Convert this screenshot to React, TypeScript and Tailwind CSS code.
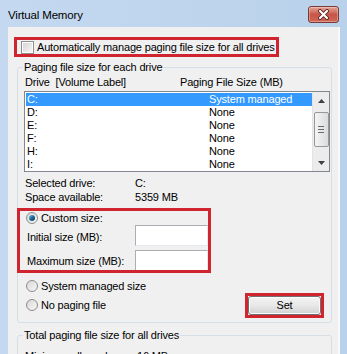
import React from "react";

const drives = [
  { drive: "C:", size: "System managed" },
  { drive: "D:", size: "None" },
  { drive: "E:", size: "None" },
  { drive: "F:", size: "None" },
  { drive: "H:", size: "None" },
  { drive: "I:", size: "None" },
];

function CheckBox() {
  return (
    <div className="w-[13px] h-[13px] shrink-0 border border-[#8f8f8f] bg-white p-[1px]">
      <div className="w-full h-full bg-gradient-to-br from-[#d6d6d6] to-[#f6f6f6]" />
    </div>
  );
}

function Radio({ checked }: { checked?: boolean }) {
  return (
    <div className="w-[12px] h-[12px] shrink-0 rounded-full border border-[#8c8c8c] bg-gradient-to-br from-[#d8d8d8] to-[#f8f8f8] flex items-center justify-center">
      {checked && (
        <div className="w-[6px] h-[6px] rounded-full bg-gradient-to-br from-[#6fc3e6] via-[#1d6a94] to-[#0c3450]" />
      )}
    </div>
  );
}

function RedBox({ className, children }: { className?: string; children?: React.ReactNode }) {
  return <div className={"border-[3px] border-[#d0252f] " + (className ?? "")}>{children}</div>;
}

function GroupBox({
  title,
  className,
  children,
}: {
  title: string;
  className?: string;
  children?: React.ReactNode;
}) {
  return (
    <div className={"relative border border-[#d5dfe5] rounded-[3px] " + (className ?? "")}>
      <span className="absolute top-[-8px] left-[5px] px-[1px] leading-[14px] bg-[#f0f0f0] whitespace-nowrap">
        {title}
      </span>
      {children}
    </div>
  );
}

function ScrollBar() {
  return (
    <div className="w-[17px] shrink-0 bg-[#ececec] border-l border-[#e4e4e4] flex flex-col items-center">
      <div className="h-[17px] w-full flex items-center justify-center">
        <svg width="7" height="4" viewBox="0 0 7 4">
          <path d="M0 4 L3.5 0 L7 4 Z" fill="#404040" />
        </svg>
      </div>
      <div className="mt-[3px] h-[35px] w-[15px] rounded-[2px] border border-[#979797] bg-gradient-to-r from-[#f4f4f4] to-[#dcdcdc] flex flex-col items-center justify-center gap-[2px]">
        <div className="w-[6px] h-[1px] bg-[#6b6b6b]" />
        <div className="w-[6px] h-[1px] bg-[#6b6b6b]" />
        <div className="w-[6px] h-[1px] bg-[#6b6b6b]" />
      </div>
      <div className="mt-auto h-[17px] w-full flex items-center justify-center">
        <svg width="7" height="4" viewBox="0 0 7 4">
          <path d="M0 0 L3.5 4 L7 0 Z" fill="#404040" />
        </svg>
      </div>
    </div>
  );
}

function TextInput() {
  return (
    <div className="w-[73px] h-[21px] bg-white border border-[#e3e9ef] border-t-[#abadb3] border-l-[#abadb3]" />
  );
}

export default function App() {
  return (
    <div className="w-[347px] h-[354px] overflow-hidden bg-gradient-to-r from-[#c4d9f0] to-[#b9d1ea] text-[11px] tracking-[-0.17px] text-black font-['Liberation_Sans',Arial,sans-serif]">
      {/* Title bar */}
      <div className="h-[27px] flex items-start justify-between pl-[8px] pr-[8px]">
        <span className="pt-[7px] leading-[16px] text-[11.5px]">Virtual Memory</span>
        <div className="mt-[6px] h-[17px] w-[31px] rounded-[3px] border border-[#7a3a36] bg-gradient-to-b from-[#e4a597] via-[#c7564a] to-[#cf6655] flex items-center justify-center shadow-[inset_0_0_0_1px_rgba(255,255,255,0.3)]">
          <svg width="13" height="11" viewBox="0 0 13 11">
            <path d="M3 2 L10 9 M10 2 L3 9" stroke="#4a1d1a" strokeWidth="3.8" strokeLinecap="round" />
            <path d="M3 2 L10 9 M10 2 L3 9" stroke="#ffffff" strokeWidth="2.2" strokeLinecap="round" />
          </svg>
        </div>
      </div>

      {/* Dialog body */}
      <div className="ml-[8px] w-[332px] h-[327px] bg-[#f0f0f0] border-r-2 border-[#f7f9fb] pt-[10px]">
        <RedBox className="ml-[6px] w-[265px] h-[20px] flex items-center pl-[4px] gap-[3px]">
          <CheckBox />
          <span className="leading-[14px] whitespace-nowrap">
            Automatically manage paging file size for all drives
          </span>
        </RedBox>

        <GroupBox title="Paging file size for each drive" className="mt-[10px] ml-[9px] w-[315px] h-[256px] pl-[6px] pt-[7px]">
          <div className="flex h-[14px] leading-[14px] pl-[1px]">
            <span className="w-[155px]">Drive&nbsp;&nbsp;[Volume Label]</span>
            <span>Paging File Size (MB)</span>
          </div>

          <div className="mt-[2px] w-[306px] h-[81px] border border-[#828790] bg-white flex">
            <div className="flex-1 pt-[1px] pl-[1px]">
              {drives.map((d, i) => (
                <div
                  key={d.drive}
                  className={
                    "flex h-[13px] leading-[13px] pl-[1px] " +
                    (i === 0 ? "bg-[#3399ff] text-white" : "")
                  }
                >
                  <span className="w-[182px]">{d.drive}</span>
                  <span>{d.size}</span>
                </div>
              ))}
            </div>
            <ScrollBar />
          </div>

          <div className="mt-[4px] flex h-[14px] leading-[14px] pl-[1px]">
            <span className="w-[110px]">Selected drive:</span>
            <span>C:</span>
          </div>
          <div className="flex h-[14px] leading-[14px] pl-[1px]">
            <span className="w-[110px]">Space available:</span>
            <span>5359 MB</span>
          </div>

          <RedBox className="mt-[4px] ml-[-7px] w-[194px] h-[65px] overflow-hidden">
            <div className="flex items-center h-[14px] pl-[6px] gap-[3px] leading-[14px]">
              <Radio checked />
              <span>Custom size:</span>
            </div>
            <div className="flex items-center h-[21px] pl-[7px]">
              <span className="w-[108px] pt-[3px]">Initial size (MB):</span>
              <TextInput />
            </div>
            <div className="mt-[4px] flex items-center h-[21px] pl-[7px]">
              <span className="w-[108px] pt-[1px]">Maximum size (MB):</span>
              <TextInput />
            </div>
          </RedBox>

          <div className="flex">
            <div className="mt-[6px] flex flex-col gap-[5px] pl-[2px]">
              <div className="flex items-center h-[14px] gap-[3px] leading-[14px]">
                <Radio />
                <span>System managed size</span>
              </div>
              <div className="flex items-center h-[14px] gap-[3px] leading-[14px]">
                <Radio />
                <span>No paging file</span>
              </div>
            </div>
            <RedBox className="mt-[20px] ml-auto mr-[7px] w-[79px] h-[25px]">
              <button className="w-full h-full rounded-[3px] border border-[#707070] bg-gradient-to-b from-[#f3f3f3] via-[#e8e8e8] to-[#d2d2d2] shadow-[inset_0_0_0_1px_#fcfcfc] leading-[17px]">
                Set
              </button>
            </RedBox>
          </div>
        </GroupBox>

        <GroupBox title="Total paging file size for all drives" className="mt-[12px] ml-[9px] w-[315px] h-[60px] pl-[7px] pt-[13px]">
          <div className="flex h-[14px] leading-[14px]">
            <span className="w-[112px]">Minimum allowed:</span>
            <span>16 MB</span>
          </div>
        </GroupBox>
      </div>
    </div>
  );
}
